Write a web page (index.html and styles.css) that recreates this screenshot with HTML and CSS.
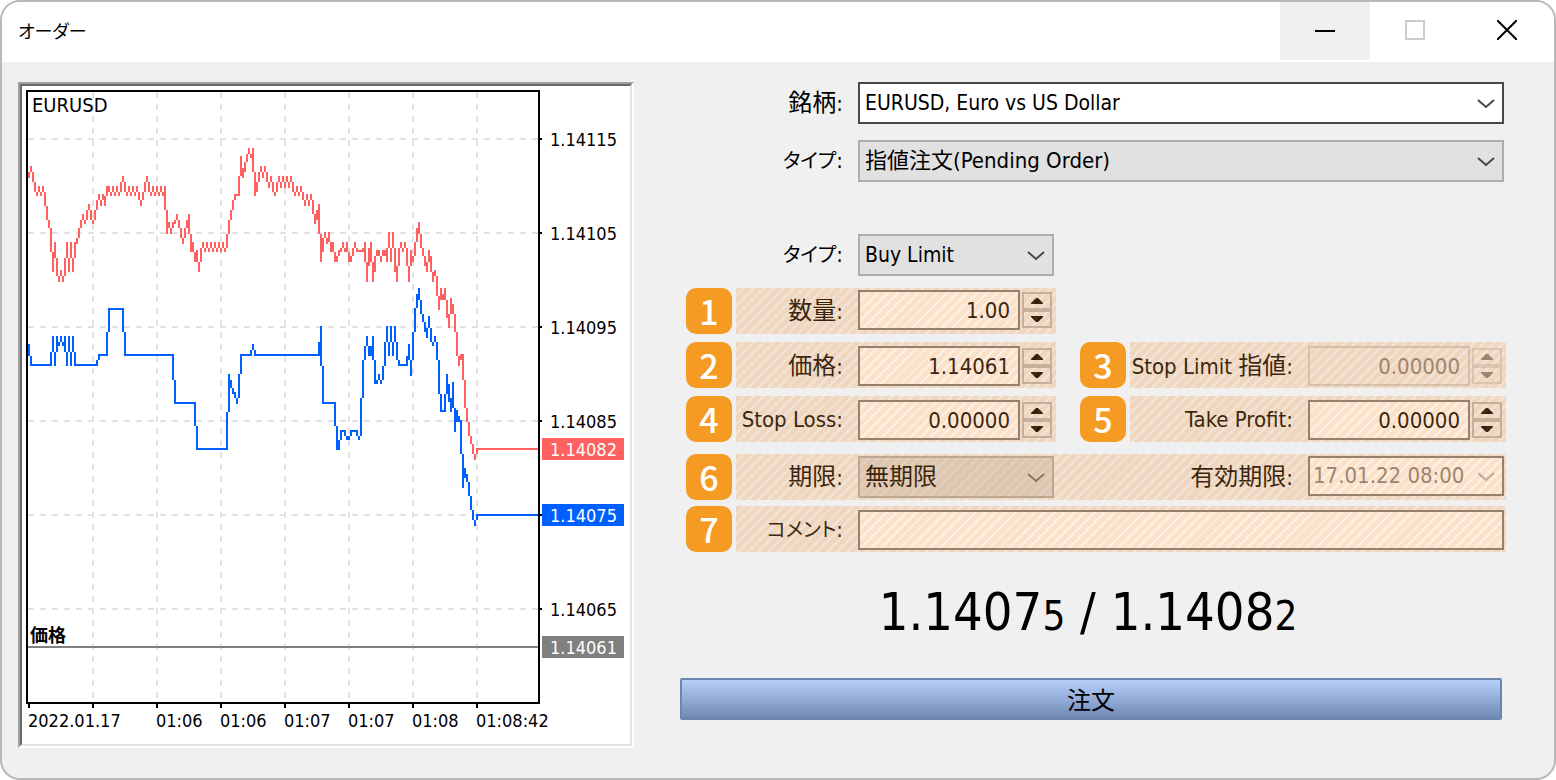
FILE: index.html
```html
<!DOCTYPE html>
<html lang="ja">
<head>
<meta charset="utf-8">
<title>オーダー</title>
<link rel="stylesheet" href="styles.css">
</head>
<body>
<svg class="defs" aria-hidden="true">
  <symbol id="chevron" viewBox="0 0 18 10"><path d="M1 1 9 8 17 1" fill="none" stroke="currentColor" stroke-width="2"/></symbol>
  <symbol id="up" viewBox="0 0 12 6"><path d="M0 6V5L5 0H7L12 5V6Z" fill="currentColor"/></symbol>
  <symbol id="down" viewBox="0 0 12 6"><path d="M0 0V1L5 6H7L12 1V0Z" fill="currentColor"/></symbol>
</svg>
<main class="window">
  <header class="titlebar">
    <h1 class="title">オーダー</h1>
    <div class="window-buttons">
      <button class="window-button window-button-active" aria-label="最小化"><svg width="20" height="20" viewBox="0 0 20 20"><path d="M0 11H20" stroke="#000" stroke-width="2"/></svg></button>
      <button class="window-button" aria-label="最大化" disabled><svg width="20" height="20" viewBox="0 0 20 20"><path d="M1 1H19V19H1Z" fill="none" stroke="#ccc" stroke-width="2"/></svg></button>
      <button class="window-button window-button-close" aria-label="閉じる"><svg width="20" height="20" viewBox="0 0 20 20"><path d="M0 0 20 20M20 0 0 20" stroke="#000" stroke-width="2"/></svg></button>
    </div>
  </header>
  <div class="content">
    <section class="chart-panel" aria-label="EURUSD">
      <svg class="chart" viewBox="22 86 608 658">
        <path class="grid-line" d="M28 139H538M28 233H538M28 327H538M28 421H538M28 515H538M28 609H538M93 92V702M157 92V702M221 92V702M285 92V702M349 92V702M413 92V702M477 92V702"/>
        <path class="frame" d="M27 91H539V703H27Z"/>
        <path class="frame" d="M540 139h2M540 233h2M540 327h2M540 421h2M540 515h2M540 609h2M29 704v4M93 704v4M157 704v4M221 704v4M285 704v4M349 704v4M413 704v4M477 704v4"/>
        <path class="price-line" d="M28 647H538"/>
        <path id="ask" class="ask"/>
        <path id="bid" class="bid"/>
        <text class="chart-symbol" x="32" y="112">EURUSD</text>
        <text class="price-name" x="30" y="642">価格</text>
        <g>
          <text x="550" y="146">1.14115</text>
          <text x="550" y="240">1.14105</text>
          <text x="550" y="334">1.14095</text>
          <text x="550" y="428">1.14085</text>
          <text x="550" y="616">1.14065</text>
        </g>
        <rect class="ask" x="542" y="438" width="82" height="22"/>
        <rect class="bid" x="542" y="504" width="82" height="22"/>
        <rect class="pending" x="542" y="636" width="82" height="22"/>
        <g class="tag-text">
          <text x="550" y="456">1.14082</text>
          <text x="550" y="522">1.14075</text>
          <text x="550" y="654">1.14061</text>
        </g>
        <g>
          <text x="28" y="727">2022.01.17</text>
          <text x="156" y="727">01:06</text>
          <text x="220" y="727">01:06</text>
          <text x="284" y="727">01:07</text>
          <text x="348" y="727">01:07</text>
          <text x="412" y="727">01:08</text>
          <text x="476" y="727">01:08:42</text>
        </g>
      </svg>
    </section>

    <form class="form">
      <div class="row row-symbol">
        <div class="band band-wide plain">
          <label class="label" for="symbol"><span class="jp">銘柄</span>:</label>
          <div class="select select-symbol"><select id="symbol"><option>EURUSD, Euro vs US Dollar</option></select><svg class="chevron"><use href="#chevron"/></svg></div>
        </div>
      </div>
      <div class="row row-type">
        <div class="band band-wide plain">
          <label class="label" for="type"><span class="jp kana">タイプ</span>:</label>
          <div class="select select-type"><select id="type"><option>指値注文(Pending Order)</option></select><svg class="chevron"><use href="#chevron"/></svg></div>
        </div>
      </div>
      <div class="row row-order">
        <div class="band plain">
          <label class="label" for="order"><span class="jp kana">タイプ</span>:</label>
          <div class="select"><select id="order"><option>Buy Limit</option></select><svg class="chevron"><use href="#chevron"/></svg></div>
        </div>
      </div>
      <div class="row row-volume">
        <span class="badge">1</span>
        <div class="band marked">
          <label class="label" for="volume"><span class="jp">数量</span>:</label>
          <input class="field" id="volume" value="1.00">
          <span class="spinner"><button type="button" aria-label="増やす"><svg><use href="#up"/></svg></button><button type="button" aria-label="減らす"><svg><use href="#down"/></svg></button></span>
        </div>
      </div>
      <div class="row row-price">
        <span class="badge">2</span>
        <div class="band marked">
          <label class="label" for="price"><span class="jp">価格</span>:</label>
          <input class="field" id="price" value="1.14061">
          <span class="spinner"><button type="button" aria-label="増やす"><svg><use href="#up"/></svg></button><button type="button" aria-label="減らす"><svg><use href="#down"/></svg></button></span>
        </div>
        <span class="badge badge-second">3</span>
        <div class="band marked band-second">
          <label class="label" for="stoplimit">Stop Limit <span class="jp">指値</span>:</label>
          <input class="field" id="stoplimit" value="0.00000" disabled>
          <span class="spinner spinner-off"><button type="button" aria-label="増やす" disabled><svg><use href="#up"/></svg></button><button type="button" aria-label="減らす" disabled><svg><use href="#down"/></svg></button></span>
        </div>
      </div>
      <div class="row row-stop">
        <span class="badge">4</span>
        <div class="band marked">
          <label class="label" for="stoploss">Stop Loss:</label>
          <input class="field" id="stoploss" value="0.00000">
          <span class="spinner"><button type="button" aria-label="増やす"><svg><use href="#up"/></svg></button><button type="button" aria-label="減らす"><svg><use href="#down"/></svg></button></span>
        </div>
        <span class="badge badge-second">5</span>
        <div class="band marked band-second">
          <label class="label" for="takeprofit">Take Profit:</label>
          <input class="field" id="takeprofit" value="0.00000">
          <span class="spinner"><button type="button" aria-label="増やす"><svg><use href="#up"/></svg></button><button type="button" aria-label="減らす"><svg><use href="#down"/></svg></button></span>
        </div>
      </div>
      <div class="row row-expiry">
        <span class="badge">6</span>
        <div class="band band-wide marked">
          <label class="label" for="expiry"><span class="jp">期限</span>:</label>
          <div class="select select-half select-expiry"><select id="expiry"><option>無期限</option></select><svg class="chevron"><use href="#chevron"/></svg></div>
          <label class="label label-grow" for="until"><span class="jp">有効期限</span>:</label>
          <div class="select select-half select-until"><select id="until" disabled><option>17.01.22 08:00</option></select><svg class="chevron"><use href="#chevron"/></svg></div>
        </div>
      </div>
      <div class="row row-comment">
        <span class="badge">7</span>
        <div class="band band-wide marked">
          <label class="label" for="comment"><span class="jp kana">コメント</span>:</label>
          <input class="field field-text" id="comment">
        </div>
      </div>
      <p class="quote">1.1407<small>5</small> / 1.1408<small>2</small></p>
      <button class="submit" type="button">注文</button>
    </form>
  </div>
</main>
<script src="chart.js"></script>
</body>
</html>
```

FILE: styles.css
```css
* { box-sizing: border-box; }

body {
  margin: 0;
  background: #fff;
  color: #000;
  font: 22px/26px "DejaVu Sans Condensed", "Noto Sans", "Noto Sans CJK JP", sans-serif;
}

button, input, select { font: inherit; color: inherit; margin: 0; }
.defs { display: none; }

.window {
  min-height: 100vh;
  border: 2px solid #b9b9b9;
  border-radius: 20px;
  background: #f0f0f0;
  overflow: hidden;
}

.titlebar {
  display: flex;
  justify-content: space-between;
  height: 60px;
  padding-left: 16px;
  background: #fff;
}
.title {
  margin: 0;
  font: 18px/56px "Noto Sans CJK JP", sans-serif;
  font-feature-settings: "palt";
}
.window-buttons { display: flex; }
.window-button {
  display: grid;
  place-items: center;
  width: 90px;
  height: 58px;
  padding: 0 0 2px;
  border: 0;
  background: transparent;
}
.window-button-active { background: #f0f0f0; }
.window-button-close { width: 94px; }

.content {
  display: grid;
  grid-template-columns: minmax(0, 616fr) minmax(0, 826fr);
  column-gap: 46px;
  align-items: start;
  padding: 20px 48px 30px 16px;
}

.chart-panel {
  border: 2px solid;
  border-color: #a0a0a0 #fff #fff #a0a0a0;
}
.chart {
  display: block;
  width: 100%;
  border: 2px solid;
  border-color: #696969 #e3e3e3 #e3e3e3 #696969;
  background: #fff;
  font-size: 18px;
}
.chart path, .chart rect { shape-rendering: crispEdges; }
.grid-line { fill: none; stroke: #e2e2e2; stroke-width: 2; stroke-dasharray: 6; }
.frame { fill: none; stroke: #000; stroke-width: 2; }
.price-line { stroke: #808080; stroke-width: 2; }
.chart-symbol { font-size: 20px; }
.price-name { font-family: "Noto Sans CJK JP", sans-serif; font-weight: 700; }
.ask { fill: #ff6060; }
.bid { fill: #0060ff; }
.pending { fill: #808080; }
.tag-text { fill: #fff; }

.form { display: flex; flex-direction: column; }
.row {
  display: grid;
  grid-template-columns: 46px minmax(0, 320fr) 16px 46px minmax(0, 376fr);
  column-gap: 4px;
  padding-left: 6px;
}
.row-type { margin-top: 16px; }
.row-order { margin-top: 52px; }
.row-volume, .row-expiry { margin-top: 12px; }
.row-price, .row-stop { margin-top: 8px; }
.row-comment { margin-top: 6px; }

.badge {
  grid-column: 1;
  height: 46px;
  border-radius: 10px;
  background: #f59b23;
  color: #fff;
  font: 500 34px/46px "Noto Sans CJK JP", sans-serif;
  text-align: center;
}
.badge-second { grid-column: 4; }

.band {
  position: relative;
  grid-column: 2;
  display: flex;
  align-items: center;
  height: 46px;
  padding-right: 2px;
}
.plain { height: 42px; }
.band-second { grid-column: 5; }
.band-wide { grid-column: 2 / -1; }
.row-price .band, .row-stop .band, .row-comment .band { padding-top: 2px; }
.marked::after {
  content: "";
  position: absolute;
  inset: 0;
  background: repeating-linear-gradient(135deg, rgba(240, 145, 55, .27) 0 5px, rgba(240, 170, 100, .17) 5px 7px);
  pointer-events: none;
}

.label {
  flex: none;
  width: 122px;
  padding: 0 15px 2px 0;
  text-align: right;
  white-space: nowrap;
}
.row-stop .label { padding-bottom: 0; }
.band-second .label { width: 178px; }
.band-wide .label-grow { flex: 1; }
.jp {
  font: 24px/26px "Noto Sans CJK JP", sans-serif;
  font-feature-settings: "palt";
}
.kana { font-size: 20px; }

.select { position: relative; flex: 1; min-width: 0; }
.select-half { flex: 0 0 196px; }
.select select {
  display: block;
  appearance: none;
  width: 100%;
  height: 42px;
  padding: 0 28px 0 5px;
  border: 2px solid #adadad;
  border-radius: 0;
  background: #e1e1e1;
  font-size: 21px;
  opacity: 1;
}
.select-symbol select { border-color: #484848; background: #fff; }
.select-type select { font-size: 22px; }
.select-expiry select { background: #d9d9d9; font-size: 24px; }
.select-until { margin-bottom: 2px; }
.select-until select {
  height: 40px;
  padding: 0 20px 0 3px;
  border-color: #7a7a7a;
  background: #fff;
  color: #808080;
  font-size: 22px;
}
.chevron {
  position: absolute;
  right: 9px;
  top: 50%;
  width: 18px;
  height: 10px;
  margin-top: -4px;
  color: #484848;
  pointer-events: none;
}
.select-expiry .chevron { color: #6b6b6b; }
.select-until .chevron { color: #b0b0b0; }

.field {
  flex: 1;
  min-width: 0;
  height: 40px;
  padding: 0 8px;
  border: 2px solid #7a7a7a;
  border-radius: 0;
  background: #fff;
  text-align: right;
}
.field-text { text-align: left; }
.field:disabled { border-color: #ccc; background: #f0f0f0; color: #808080; }
.row-volume .field, .row-volume .spinner { margin-bottom: 2px; }

.spinner {
  display: grid;
  flex: none;
  grid-template-rows: 18px 18px;
  width: 30px;
  margin: 0 2px;
}
.spinner button {
  display: grid;
  place-items: center;
  padding: 0;
  border: 2px solid #b8b8b8;
  background: #f0f0f0;
  color: #000;
}
.spinner svg { width: 12px; height: 6px; }
.spinner-off button { border-color: #d4d4d4; color: #808080; }

.quote {
  margin: 30px 0 0;
  padding-right: 10px;
  font-size: 52px;
  line-height: 60px;
  text-align: center;
  white-space: nowrap;
}
.quote small { font-size: 40px; line-height: 40px; }

.submit {
  height: 42px;
  margin: 36px 4px 0 0;
  padding: 0;
  border: 2px solid #6c84b0;
  border-radius: 2px;
  background: linear-gradient(#b6cffb, #7088b4);
  font: 24px/36px "Noto Sans CJK JP", sans-serif;
}
```

FILE: chart.js
```js
// Tick prices as points above 1.14000, one per sample; "value*count" repeats a value.
const ASK = "111 112 111 110 109 110 109 110 109 107 106 105 101 104 101 100 101 100 101 104 101 104 101 104 104 105 106 107 106 107 108 107 106 107 108 109 108 109 108 110 110 109 110 109 110 109 110 111 110 109 110 109 110 109 110 109 108 109 110 111 110 109 110 109 110 109 110 109 110 105 106 105 106 106 107 106 105 104 105 106 107 103 104 102 103 101 103 104 103 104 103 104 103 104 103 104 103 104 103 104 106 107 108 109 109 109 113 111 112 113 114 113 114 109 110 111 112 111 112 111 110 111 110 109 110 111 110 111 110 111 110 111 110 109 110 109 110 109 108 109 108 109 108 106 107 108 102 104 105 104 105 103 104 102 102 103 103 104 103 104 102 102 103 104 103*4 104 100 103 104 100 102 103 103 102 103 103 102 105 102 105 102 100 103 104 103 104 103 100 103 102 103 105 106 104 103 102 101 103 102 100 101 100 97 99 98 99 97 95 98 97 96 93 91 92 92 87 86 84 83 82 81 82*32";
const BID = "93 91*11 94 91 94 93 94 93 94 91 94 91 94 91*12 92*5 97*8 92*25 87*11 82*16 90 89 88 88 87 88 92*6 93 92*33 95 87*7 82 82 84*3 83 83 84*4 83 84 91 92 94 92 92 94 89 89 90 89 90 92 95 92 95 92 95 92 91*5 93 90 93 96 98 99 97 96 95 94 96 94 93 94 93 90 86 86 86 90 88 86 89 84 86 85 85 78 80 79 78 76 75 74 75*32";

const CELL = 2;
const LEFT = 28;
const SAMPLES = 255;

function expand(text) {
  return text.split(" ").flatMap((item) => {
    const [value, count = 1] = item.split("*").map(Number);
    return Array(count).fill(value);
  }).slice(0, SAMPLES);
}

function rowOf(value) {
  return Math.round((138 + (115 - value) * 9.4) / CELL);
}

// The row up to which a column reaches towards its neighbour.
function reach(row, neighbour = row) {
  const middle = Math.floor((row + neighbour) / 2);
  return neighbour < row ? middle + 1 : middle;
}

function seriesPath(text) {
  const rows = expand(text).map(rowOf);
  return rows.map((row, i) => {
    const before = reach(row, rows[i - 1]);
    const after = reach(row, rows[i + 1]);
    const top = Math.min(row, before, after);
    const bottom = Math.max(row, before, after) + 1;
    return `M${LEFT + i * CELL} ${top * CELL}h${CELL}V${bottom * CELL}h${-CELL}Z`;
  }).join("");
}

document.getElementById("ask").setAttribute("d", seriesPath(ASK));
document.getElementById("bid").setAttribute("d", seriesPath(BID));
```
